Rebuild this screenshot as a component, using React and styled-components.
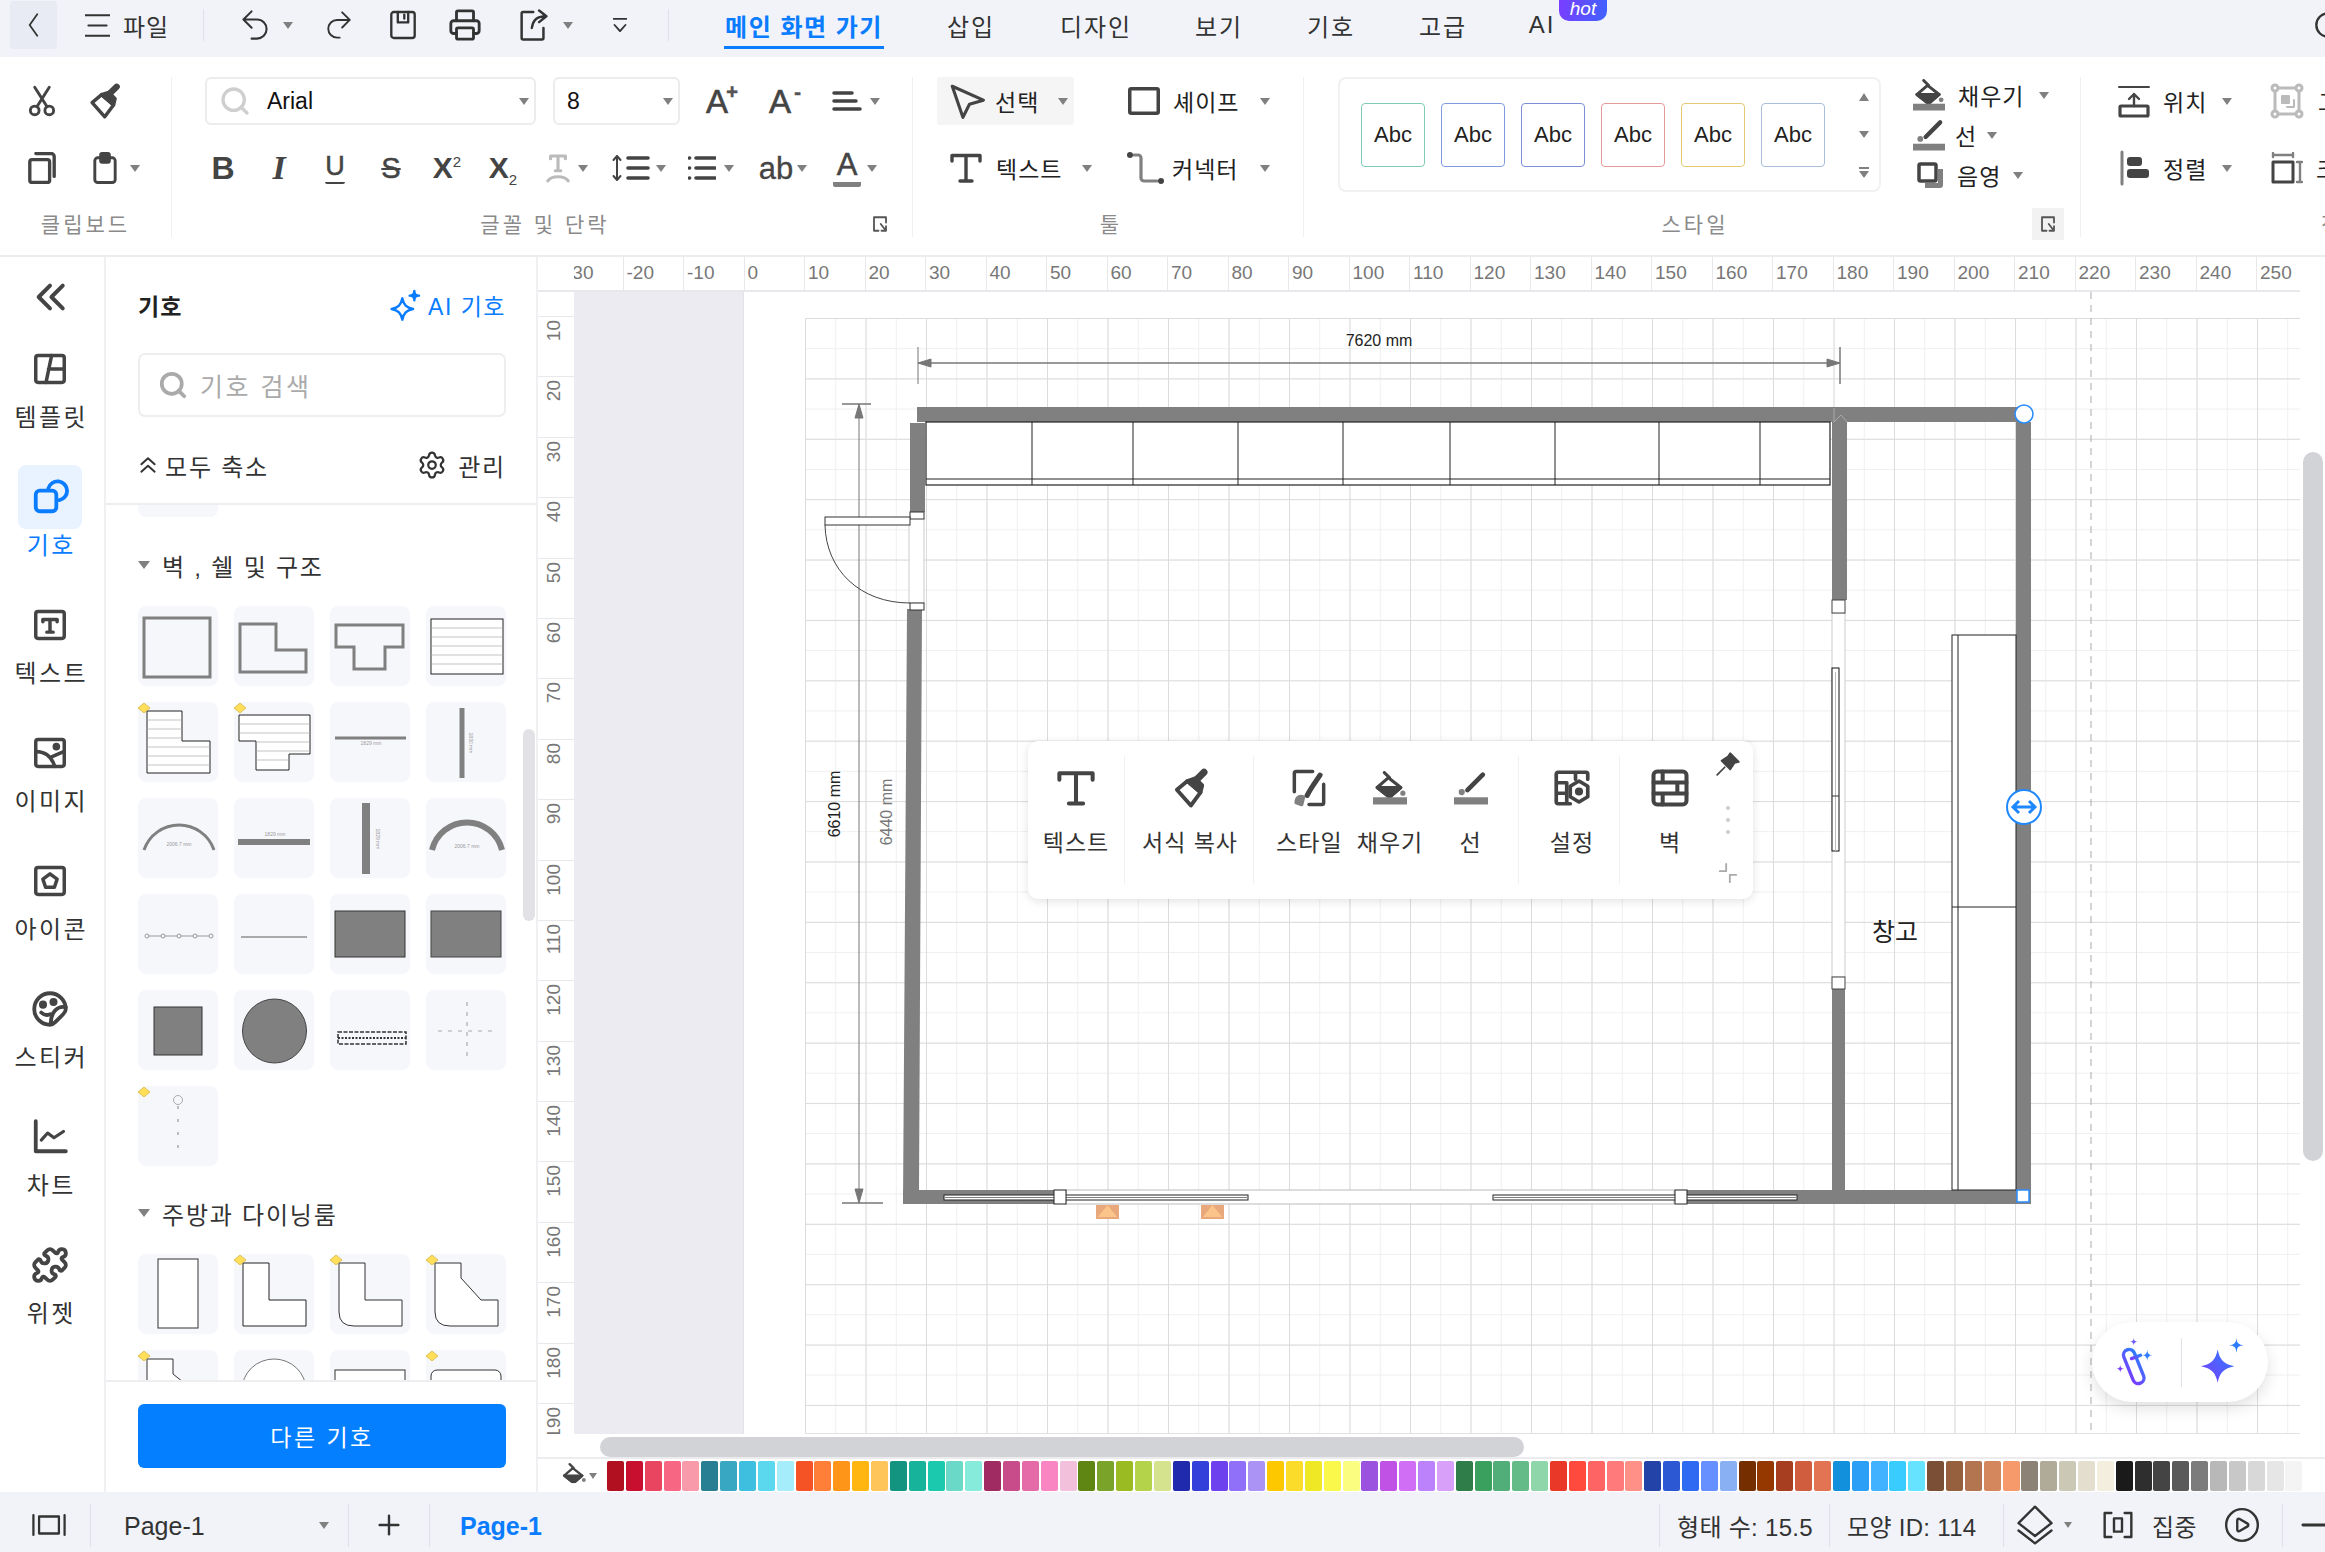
import React from "react";
import styled, { createGlobalStyle, css } from "styled-components";
import { Printer, Search, Settings, Plus, Minus, CirclePlay, Puzzle } from "lucide-react";

const FONT = `"Liberation Sans", "Noto Sans CJK KR", sans-serif`;
const BLUE = "#0a7cff";

const GlobalStyle = createGlobalStyle`
    html, body {
        margin: 0;
        width: 2325px;
        height: 1552px;
        overflow: hidden;
        background: #fff;
    }
    * { box-sizing: border-box; }
    body {
        font-family: ${FONT};
        color: #333;
    }
`;

const ml = css`
    margin-left: ${(p) => p.$ml || 0}px;
`;

const Page = styled.div`
    width: 2325px;
    height: 1552px;
    display: flex;
    flex-direction: column;
    overflow: hidden;
`;

/* ---- small shared parts ---- */

const Ico = styled.svg.attrs((p) => ({ viewBox: p.$box || "0 0 24 24" }))`
    ${ml}
    flex: none;
    display: block;
    width: ${(p) => p.$s || 32}px;
    height: ${(p) => p.$h || p.$s || 32}px;
    fill: none;
    stroke: currentColor;
    stroke-width: ${(p) => p.$sw || 2};
    stroke-linecap: round;
    stroke-linejoin: round;
    color: ${(p) => p.$c || "#444"};
`;

const Caret = styled.span`
    ${ml}
    flex: none;
    width: 0;
    height: 0;
    border-left: ${(p) => p.$s || 5}px solid transparent;
    border-right: ${(p) => p.$s || 5}px solid transparent;
    border-top: ${(p) => (p.$s || 5) + 2}px solid #808080;
`;

const VRule = styled.span`
    ${ml}
    flex: none;
    width: 1px;
    height: ${(p) => p.$h || 32}px;
    background: #dfe1e8;
`;

/* ---- title bar ---- */

const TitleBar = styled.div`
    height: 57px;
    flex: none;
    display: flex;
    align-items: center;
    padding-bottom: 7px;
    background: #f1f3f9;
    font-size: 24px;
`;

const BackBtn = styled.div`
    ${ml}
    flex: none;
    width: 47px;
    height: 48px;
    display: flex;
    align-items: center;
    justify-content: center;
    border-radius: 4px;
    background: #e8ebf3;
`;

const FileLabel = styled.span`
    ${ml}
    flex: none;
    width: 46px;
    font-size: 24px;
    letter-spacing: 1px;
    white-space: nowrap;
    color: #333;
`;

const Tab = styled.div`
    ${ml}
    position: relative;
    flex: none;
    width: ${(p) => p.$w}px;
    text-align: center;
    white-space: nowrap;
    letter-spacing: 2px;
    color: ${(p) => (p.$active ? BLUE : "#333")};
    font-weight: ${(p) => (p.$active ? 700 : 400)};
    ${(p) =>
        p.$active &&
        css`
            letter-spacing: 1.5px;
            &::after {
                content: "";
                position: absolute;
                left: 0;
                right: 0;
                top: 38px;
                height: 3px;
                background: ${BLUE};
            }
        `}
`;

const HotBadge = styled.span`
    position: absolute;
    left: 32px;
    top: -11px;
    width: 48px;
    height: 21px;
    border-radius: 0 0 10px 10px;
    background: linear-gradient(100deg, #7a3dff, #3f63ff);
    color: #fff;
    font-size: 19px;
    line-height: 18px;
    font-style: italic;
    letter-spacing: 0;
    font-weight: 400;
`;

/* ---- ribbon ---- */

const Ribbon = styled.div`
    height: 200px;
    flex: none;
    display: flex;
    background: #fff;
    border-bottom: 2px solid #ececef;
    overflow: hidden;
`;

const Group = styled.div`
    position: relative;
    flex: none;
    width: ${(p) => p.$w}px;
    height: 160px;
    margin-top: 20px;
    border-right: ${(p) => (p.$open ? "none" : "1px solid #f0f0f2")};
`;

const Rows = styled.div`
    height: 115px;
    display: flex;
    flex-direction: column;
    justify-content: space-between;
`;

const Row = styled.div`
    height: 48px;
    display: flex;
    align-items: center;
`;

const GroupLabel = styled.div`
    ${ml}
    margin-top: 21px;
    padding-left: ${(p) => p.$shift || 0}px;
    text-align: ${(p) => (p.$ml ? "left" : "center")};
    font-size: 21px;
    line-height: 24px;
    letter-spacing: 3px;
    white-space: nowrap;
    color: #8a8a8a;
`;

const Launcher = styled.div`
    position: absolute;
    right: 16px;
    top: 131px;
    width: 32px;
    height: 32px;
    display: flex;
    align-items: center;
    justify-content: center;
    background: ${(p) => (p.$on ? "#f2f2f2" : "transparent")};
`;

const Cell = styled.div`
    ${ml}
    flex: none;
    width: ${(p) => p.$w}px;
    display: flex;
    align-items: center;
    justify-content: center;
    gap: ${(p) => p.$gap || 0}px;
    color: #444;
`;

const Glyph = styled.span`
    position: relative;
    font-family: ${(p) => (p.$serif ? '"Liberation Serif", serif' : '"Liberation Sans", sans-serif')};
    font-size: ${(p) => p.$s || 32}px;
    line-height: 1;
    font-weight: ${(p) => p.$wt || 700};
    font-style: ${(p) => (p.$it ? "italic" : "normal")};
    text-decoration: ${(p) => p.$deco || "none"};
    -webkit-text-stroke: ${(p) => p.$th || 0}px currentColor;
    color: ${(p) => p.$c || "#444"};
    sup, sub {
        font-size: 15px;
        line-height: 0;
        font-weight: 400;
        -webkit-text-stroke: 0;
    }
`;

const BarredGlyph = styled(Glyph)`
    display: inline-block;
    padding: 0 ${(p) => p.$pad || 0}px 2px;
    border-bottom: ${(p) => p.$bar || 5}px solid ${(p) => p.$barC || "#808080"};
    border-radius: 0 0 2px 2px;
`;

const SizeMark = styled.span`
    position: absolute;
    right: -10px;
    top: -3px;
    font-size: 20px;
    line-height: 20px;
    font-weight: 700;
    color: #555;
`;

const Field = styled.div`
    ${ml}
    flex: none;
    width: ${(p) => p.$w}px;
    height: 48px;
    display: flex;
    align-items: center;
    padding: 0 5px 0 ${(p) => p.$pl || 12}px;
    border: 2px solid #ececee;
    border-radius: 6px;
    font-size: 23px;
    color: #111;
`;

const FieldText = styled.span`
    ${ml}
    flex: 1;
`;

const SelectBtn = styled.div`
    ${ml}
    flex: none;
    width: 137px;
    height: 48px;
    display: flex;
    align-items: center;
    padding-left: 12px;
    border-radius: 3px;
    background: #f5f5f5;
`;

const ToolText = styled.span`
    ${ml}
    flex: none;
    width: ${(p) => (p.$w ? `${p.$w}px` : "auto")};
    font-size: 23px;
    letter-spacing: 1px;
    white-space: nowrap;
    color: #222;
`;

const StyleBox = styled.div`
    ${ml}
    flex: none;
    width: 543px;
    height: 115px;
    display: flex;
    align-items: center;
    padding-left: 21px;
    gap: 16px;
    border: 2px solid #f1f1f3;
    border-radius: 8px;
`;

const StyleCard = styled.div`
    flex: none;
    width: 64px;
    height: 64px;
    display: flex;
    align-items: center;
    justify-content: center;
    border: 1px solid ${(p) => p.$c};
    border-radius: 4px;
    font-size: 22px;
    color: #222;
`;

const StyleArrows = styled.div`
    flex: 1;
    height: 100%;
    display: flex;
    flex-direction: column;
    align-items: center;
    justify-content: space-between;
    padding: 14px 0 12px 8px;
`;

const UpCaret = styled(Caret)`
    border-top: none;
    border-bottom: 8px solid #808080;
`;

const ArrowStack = styled.div`
    display: flex;
    flex-direction: column;
    align-items: center;
    gap: 2px;
    &::before {
        content: "";
        width: 10px;
        height: 2px;
        background: #808080;
    }
`;

const StyleRow = styled.div`
    display: flex;
    height: 115px;
`;

const FillCol = styled.div`
    ${ml}
    display: flex;
    flex-direction: column;
    justify-content: space-between;
    height: 118px;
    margin-top: -1px;
`;

const FillRow = styled.div`
    height: 38px;
    display: flex;
    align-items: center;
`;

/* ---- main area ---- */

const Main = styled.div`
    flex: 1;
    min-height: 0;
    display: flex;
`;

const Sidebar = styled.div`
    width: 106px;
    flex: none;
    padding-right: 4px;
    border-right: 2px solid #f0f0f2;
`;

const CollapseBtn = styled.div`
    height: 80px;
    display: flex;
    align-items: center;
    justify-content: center;
`;

const NavItem = styled.div`
    height: 128px;
    display: flex;
    flex-direction: column;
    align-items: center;
`;

const NavIcon = styled.div`
    flex: none;
    width: 64px;
    height: 64px;
    display: flex;
    align-items: center;
    justify-content: center;
    border-radius: 8px;
    background: ${(p) => (p.$active ? "#e9f3ff" : "transparent")};
`;

const NavLabel = styled.div`
    padding-top: 1px;
    line-height: 32px;
    font-size: 24px;
    letter-spacing: 2.4px;
    margin-right: -2.4px;
    white-space: nowrap;
    color: ${(p) => (p.$active ? BLUE : "#333")};
`;

const Panel = styled.div`
    width: 432px;
    flex: none;
    display: flex;
    flex-direction: column;
    border-right: 2px solid #f0f0f2;
`;

const PanelHead = styled.div`
    height: 248px;
    flex: none;
    padding: 32px 30px 0 32px;
    border-bottom: 2px solid #eeeef0;
`;

const HeadRow = styled.div`
    height: 32px;
    display: flex;
    align-items: center;
    justify-content: space-between;
`;

const PanelTitle = styled.div`
    font-size: 23px;
    font-weight: 700;
    letter-spacing: 1px;
    color: #222;
`;

const AiLink = styled.div`
    display: flex;
    align-items: center;
    gap: 7px;
    font-size: 23px;
    letter-spacing: 1.5px;
    color: ${BLUE};
`;

const SearchBox = styled.div`
    height: 64px;
    margin: 32px 0;
    display: flex;
    align-items: center;
    gap: 12px;
    padding-left: 18px;
    border: 2px solid #eeeef0;
    border-radius: 7px;
    font-size: 25px;
    letter-spacing: 2.5px;
    color: #aaa;
`;

const HeadGroup = styled.div`
    display: flex;
    align-items: center;
    gap: ${(p) => p.$gap || 11}px;
    font-size: 24px;
    letter-spacing: 1.8px;
    color: #333;
`;

const Scroller = styled.div`
    position: relative;
    flex: 1;
    min-height: 0;
    overflow: hidden;
    padding: 0 32px;
`;

const ScrollThumb = styled.div`
    position: absolute;
    right: 1px;
    top: 224px;
    width: 12px;
    height: 192px;
    border-radius: 6px;
    background: #e2e2e6;
`;

const CutCard = styled.div`
    width: 80px;
    height: 12px;
    border-radius: 0 0 8px 8px;
    background: #f6f7fb;
`;

const SectionHead = styled.div`
    height: 32px;
    margin: ${(p) => p.$mt}px 0 25px;
    display: flex;
    align-items: center;
    gap: 12px;
    font-size: 24px;
    letter-spacing: 1.8px;
    color: #333;
`;

const SymbolGrid = styled.div`
    display: grid;
    grid-template-columns: repeat(4, 80px);
    grid-auto-rows: 80px;
    gap: 16px;
`;

const SymbolCard = styled.div`
    position: relative;
    border-radius: 8px;
    background: #f6f7fb;
    svg {
        display: block;
        width: 80px;
        height: 80px;
    }
`;

const PanelFoot = styled.div`
    height: 112px;
    flex: none;
    padding: 22px 30px 0 32px;
    border-top: 2px solid #eeeef0;
`;

const MoreBtn = styled.div`
    height: 64px;
    display: flex;
    align-items: center;
    justify-content: center;
    border-radius: 6px;
    background: #047fff;
    color: #fff;
    font-size: 23px;
    letter-spacing: 2.5px;
`;

const Workspace = styled.div`
    flex: 1;
    min-width: 0;
    display: flex;
    flex-direction: column;
`;

const TopRuler = styled.div`
    height: 35px;
    flex: none;
    display: flex;
    width: 1762px;
    overflow: hidden;
    border-bottom: 2px solid #e8e8ec;
`;

const RulerCorner = styled.div`
    width: 36px;
    flex: none;
    background: #fff;
    position: relative;
    z-index: 1;
`;

const HTicks = styled.div`
    display: flex;
    margin-left: -12px;
`;

const HTick = styled.div`
    flex: none;
    width: 60.5px;
    padding: 3px 0 0 3px;
    border-left: 1px solid #e8e8ec;
    font-size: 19px;
    line-height: 26px;
    color: #777;
`;

const MidRow = styled.div`
    flex: 1;
    min-height: 0;
    display: flex;
`;

const SideRuler = styled.div`
    width: 36px;
    flex: none;
    padding-top: 24px;
    overflow: hidden;
`;

const VTick = styled.div`
    height: 60.4px;
    display: flex;
    justify-content: center;
    align-items: flex-start;
    padding: 3px 4px 0 0;
    border-top: 1px solid #e8e8ec;
    font-size: 19px;
    line-height: 22px;
    color: #777;
    white-space: nowrap;
    span {
        writing-mode: vertical-rl;
        transform: rotate(180deg);
    }
`;

const Canvas = styled.div`
    position: relative;
    width: 1726px;
    flex: none;
    display: flex;
    overflow: hidden;
`;

const Gutter = styled.div`
    width: 170px;
    flex: none;
    background: #ebebf1;
    border-right: 1px solid #e2e2e8;
`;

const Sheet = styled.div`
    flex: 1;
    padding: 26px 0 0 61px;
    background: #fff;
`;

const Grid = styled.div`
    width: 100%;
    height: 100%;
    background-color: #fff;
    background-image:
        linear-gradient(to right, #dcdcdc 1px, transparent 1px),
        linear-gradient(to bottom, #dcdcdc 1px, transparent 1px),
        linear-gradient(to right, #efefef 1px, transparent 1px),
        linear-gradient(to bottom, #efefef 1px, transparent 1px);
    background-size: 60.5px 60.4px, 60.5px 60.4px, 30.25px 30.2px, 30.25px 30.2px;
    border-bottom: 1px solid #e2e2e2;
`;

const PlanSvg = styled.svg`
    position: absolute;
    left: 0;
    top: 0;
    width: 1726px;
    height: 1142px;
`;

const FloatBar = styled.div`
    position: absolute;
    left: 454px;
    top: 449px;
    width: 725px;
    height: 158px;
    display: flex;
    padding: 15px 0;
    background: #fff;
    border-radius: 10px;
    box-shadow: 0 2px 10px rgba(0, 0, 0, 0.12);
`;

const FloatSection = styled.div`
    flex: none;
    width: ${(p) => p.$w}px;
    display: flex;
    justify-content: center;
    padding: 0 ${(p) => p.$pr || 0}px 0 ${(p) => p.$pl || 0}px;
    border-right: ${(p) => (p.$last ? "none" : "1px solid #f0f0f2")};
`;

const FloatItem = styled.div`
    flex: 1;
    min-width: 0;
    display: flex;
    flex-direction: column;
    align-items: center;
    padding-top: 9px;
    font-size: 23px;
    letter-spacing: 1px;
    white-space: nowrap;
    color: #333;
`;

const FloatIcon = styled.div`
    height: 46px;
    display: flex;
    align-items: center;
`;

const FloatLabel = styled.div`
    margin-top: 16px;
    line-height: 32px;
`;

const FloatSide = styled.div`
    flex: 1;
    display: flex;
    flex-direction: column;
    align-items: center;
    margin-top: -5px;
`;

const Dot = styled.span`
    flex: none;
    width: 4px;
    height: 4px;
    margin-top: ${(p) => p.$mt || 8}px;
    border-radius: 50%;
    background: #ccc;
`;

const ResizeMark = styled(Ico)`
    margin-top: 28px;
`;

const AiFloat = styled.div`
    position: absolute;
    left: 1518px;
    top: 1030px;
    width: 176px;
    height: 80px;
    display: flex;
    align-items: center;
    justify-content: space-around;
    padding: 0 8px;
    background: #fff;
    border-radius: 40px;
    box-shadow: 0 6px 16px rgba(0, 0, 0, 0.12);
`;

const VScroll = styled.div`
    flex: 1;
    padding: 160px 2px 0 3px;
`;

const Thumb = styled.div`
    width: ${(p) => (p.$w ? `${p.$w}px` : "100%")};
    height: ${(p) => (p.$h ? `${p.$h}px` : "100%")};
    ${ml}
    border-radius: 10px;
    background: #d2d3d6;
`;

const HScroll = styled.div`
    height: 25px;
    flex: none;
    padding-top: 3px;
    border-bottom: 2px solid #ececef;
`;

const Palette = styled.div`
    height: 33px;
    flex: none;
    display: flex;
    align-items: center;
    padding-left: 23px;
`;

const Swatches = styled.div`
    ${ml}
    display: flex;
    gap: 1.86px;
`;

const Swatch = styled.span`
    width: 17px;
    height: 30px;
    border-radius: 2px;
    background: ${(p) => p.$c};
`;

/* ---- status bar ---- */

const StatusBar = styled.div`
    height: 60px;
    flex: none;
    display: flex;
    align-items: center;
    padding-top: 6px;
    background: #f1f3f9;
    color: #333;
`;

const PageName = styled.span`
    ${ml}
    flex: none;
    width: ${(p) => p.$w || 83}px;
    margin-top: 3px;
    font-size: 25px;
    font-family: "Liberation Sans", sans-serif;
    white-space: nowrap;
    color: ${(p) => (p.$active ? BLUE : "#333")};
    font-weight: ${(p) => (p.$active ? 700 : 400)};
`;

const StatusText = styled.span`
    ${ml}
    flex: none;
    width: ${(p) => p.$w}px;
    font-size: 24px;
    white-space: nowrap;
    letter-spacing: 0.3px;
`;

/* ---- icons ---- */

const Scissors = () => (
    <Ico $box="3 1.500 18 22" $s={30} $h={32} $sw={2}>
        <circle cx="7" cy="19" r="3" />
        <circle cx="17" cy="19" r="3" />
        <path d="M8.500 16.500 17 3M15.500 16.500 7 3" />
    </Ico>
);
const Painter = ({ s = 38 }) => (
    <Ico $s={s} $sw={2.200}>
        <path d="M10.500 8 18 14.500 12.500 22 4.500 13z" />
        <path d="M10.500 8 18 14.500l1-4-4-4z" fill="currentColor" />
        <path d="M16 7l4-4" strokeWidth="4" />
    </Ico>
);
const Copy = () => (
    <Ico $box="3 2 18 21" $s={30} $h={32} $sw={2.200}>
        <rect x="4" y="7" width="13" height="15" rx="1.500" />
        <path d="M8 3h10a2 2 0 0 1 2 2v13" />
    </Ico>
);
const Paste = () => (
    <Ico $box="4 1 16 22" $s={28} $h={32} $sw={2}>
        <rect x="5" y="5" width="14" height="17" rx="2" />
        <rect x="9" y="2" width="6" height="6" rx="1" fill="currentColor" />
    </Ico>
);
const AlignBars = () => (
    <Ico $box="0 0 30 24" $s={30} $h={24} $sw={3.500}>
        <path d="M2 4H20M2 12H24M2 20H28" />
    </Ico>
);
const SerifT = ({ s = 32 }) => (
    <Ico $box="0 0 32 32" $s={s} $sw={3.400}>
        <path d="M2 9V3.500H30V9M16 3.500V29M10 29H22" />
    </Ico>
);
const ArcT = () => (
    <Ico $box="0 0 26 32" $s={24} $h={30} $sw={3.400} $c="#bbb">
        <path d="M5 6V3H21V6M13 3V19M10 19H16" />
        <path d="M2 30c4-6 18-6 22 0" />
    </Ico>
);
const LineSpacing = () => (
    <Ico $box="0 0 38 28" $s={38} $h={28} $sw={3.600}>
        <path d="M16 4H36M16 14H36M16 24H36" />
        <path d="M5 2V26M1.500 6 5 2l3.500 4M1.500 22 5 26l3.500-4" strokeWidth="2" />
    </Ico>
);
const BulletList = () => (
    <Ico $box="0 0 28 28" $s={28} $sw={3.600}>
        <path d="M8 4H27M8 14H27M8 24H27M1.500 4h.1M1.500 14h.1M1.500 24h.1" />
    </Ico>
);
const Arrow = () => (
    <Ico $box="1 1 22 22" $s={36} $sw={1.900}>
        <path d="M3 3 22 11.500 13.500 14 9.500 22z" />
    </Ico>
);
const Connector = () => (
    <Ico $box="0 0 40 34" $s={40} $h={34} $sw={3.200}>
        <path d="M9 4h4a3 3 0 0 1 3 3v20a3 3 0 0 0 3 3h13" stroke="#808080" />
        <circle cx="5" cy="4" r="3" fill="currentColor" stroke="none" />
        <circle cx="36" cy="30" r="3" fill="currentColor" stroke="none" />
    </Ico>
);
const FillBucket = ({ s = 32, bar = "#808080" }) => (
    <Ico $box="0 0 33 32" $s={s} $sw={3}>
        <path d="M15 6 27 15.500 16 25 4 15.500z" />
        <path d="M4 15.500H27L16 25z" fill="currentColor" />
        <path d="M11 1l5 5" />
        <circle cx="29" cy="21" r="2.500" fill="#808080" stroke="none" />
        <rect x="0" y="25" width="33" height="7" fill={bar} stroke="none" />
    </Ico>
);
const Pen = ({ s = 32 }) => (
    <Ico $box="0 0 33 32" $s={s} $sw={4.500}>
        <path d="M28 3 13 18" />
        <circle cx="7.500" cy="20" r="3" fill="#808080" stroke="none" />
        <rect x="0" y="25" width="33" height="7" fill="#808080" stroke="none" />
    </Ico>
);
const Launch = () => (
    <Ico $s={18} $sw={2.400} $c="#555">
        <path d="M20 10V3H4v18h6" />
        <path d="M13 12l7 9M20 15v6h-6" />
    </Ico>
);

const NAV = [
    {
        label: "템플릿",
        icon: (
            <Ico $s={38} $sw={2.200}>
                <rect x="3" y="3.500" width="18" height="17" rx="1.500" />
                <path d="M13 3.500 9.500 20.500M11 12h10" />
            </Ico>
        ),
    },
    {
        label: "기호",
        active: true,
        icon: (
            <Ico $s={38} $sw={2.400} $c={BLUE}>
                <path d="M11 6.500A6 6 0 1 1 18 14" />
                <rect x="3" y="8" width="13" height="13" rx="2.500" />
            </Ico>
        ),
    },
    {
        label: "텍스트",
        icon: (
            <Ico $s={38} $sw={2.200}>
                <rect x="3" y="3.500" width="18" height="17" rx="1.500" />
                <path d="M7.500 10V8.500h9V10M12 8.500v8M10 16.500h4" />
            </Ico>
        ),
    },
    {
        label: "이미지",
        icon: (
            <Ico $s={38} $sw={2.200}>
                <rect x="3" y="3.500" width="18" height="17" rx="1.500" />
                <path d="M3 11c6 0 10 3 12 9.500M13 14.500 21 11" />
                <circle cx="16" cy="8" r="1.300" fill="currentColor" />
            </Ico>
        ),
    },
    {
        label: "아이콘",
        icon: (
            <Ico $s={38} $sw={2.200}>
                <rect x="3" y="3.500" width="18" height="17" rx="1.500" />
                <path d="M12 7.500l4.500 3.300-1.700 5.200H9.200l-1.700-5.200z" />
            </Ico>
        ),
    },
    {
        label: "스티커",
        icon: (
            <Ico $s={42} $sw={2.200}>
                <path d="M21 12a9 9 0 1 0-9 9c1 0 2-.5 3-1.500l4.500-4.500c1-1 1.500-2 1.500-3z" />
                <path d="M21 11c-4-1-8.500 2-8.500 9" />
                <circle cx="8" cy="9.500" r="1.200" fill="currentColor" />
                <circle cx="14" cy="8" r="1.200" fill="currentColor" />
                <path d="M7 14c1.500 1.500 3 1.800 5 1" />
            </Ico>
        ),
    },
    {
        label: "차트",
        icon: (
            <Ico $s={38} $sw={2.400}>
                <path d="M3 2v19h19" />
                <path d="M6.500 14l4-4.500 4 3 6-4" strokeWidth="2" />
            </Ico>
        ),
    },
    { label: "위젯", icon: <Puzzle size={38} color="#444" strokeWidth={2.400} /> },
];

const W = "#808080";
const hatch = (x1, x2, ys) => ys.map((y) => <path key={y} d={`M${x1} ${y}H${x2}`} stroke="#aaa" strokeWidth=".7" />);
const Diamond = () => <path d="M6 1 12 6 6 11 0 6z" fill="#ffdf5a" stroke="#c9a92c" strokeWidth=".6" />;
const Outline = ({ points, sw = 1, c = "#222" }) => <polygon points={points} fill="#fff" stroke={c} strokeWidth={sw} />;
const TinyLabel = ({ x, y, children, rot }) => (
    <text
        x={x}
        y={y}
        fontSize="5"
        textAnchor="middle"
        fill="#999"
        fontFamily="Liberation Sans"
        transform={rot ? `rotate(90 ${x} ${y})` : undefined}
    >
        {children}
    </text>
);

const WALLS = [
    <rect x="6" y="12" width="66" height="59" fill="none" stroke={W} strokeWidth="3" />,
    <polygon points="6,18 42,18 42,44 72,44 72,66 6,66" fill="none" stroke={W} strokeWidth="3" />,
    <polygon points="6,19 73,19 73,41 55,41 55,63 24,63 24,41 6,41" fill="none" stroke={W} strokeWidth="3" />,
    <>
        <rect x="5" y="13" width="72" height="55" fill="#fff" stroke="#222" />
        {hatch(5, 77, [22, 31, 40, 49, 58])}
    </>,
    <>
        <Outline points="9,9 44,9 44,39 72,39 72,71 9,71" />
        {hatch(9, 44, [18, 27, 36])}
        {hatch(9, 72, [45, 54, 63])}
        <Diamond />
    </>,
    <>
        <Outline points="5,13 76,13 76,52 55,52 55,68 22,68 22,39 5,39" />
        {hatch(5, 76, [22, 31])}
        {hatch(22, 76, [40, 49])}
        {hatch(22, 55, [58])}
        <Diamond />
    </>,
    <>
        <path d="M5 36H76" stroke={W} strokeWidth="3" />
        <TinyLabel x={41} y={43}>1829 mm</TinyLabel>
    </>,
    <>
        <path d="M36 6V76" stroke={W} strokeWidth="5" />
        <TinyLabel x={43} y={41} rot>1830 mm</TinyLabel>
    </>,
    <>
        <path d="M6 52A37 37 0 0 1 76 52" fill="none" stroke={W} strokeWidth="3" />
        <TinyLabel x={41} y={48}>2006.7 mm</TinyLabel>
    </>,
    <>
        <path d="M4 44H76" stroke={W} strokeWidth="6" />
        <TinyLabel x={41} y={38}>1829 mm</TinyLabel>
    </>,
    <>
        <path d="M36 5V76" stroke={W} strokeWidth="8" />
        <TinyLabel x={46} y={41} rot>1829 mm</TinyLabel>
    </>,
    <>
        <path d="M6 52A36 36 0 0 1 76 52" fill="none" stroke={W} strokeWidth="6" />
        <TinyLabel x={41} y={50}>2006.7 mm</TinyLabel>
    </>,
    <>
        <path d="M9 42H75" stroke="#999" strokeWidth="1" />
        {[9, 25, 41, 57, 73].map((x) => (
            <circle key={x} cx={x} cy="42" r="2" fill="#f6f7fb" stroke="#999" />
        ))}
    </>,
    <path d="M7 43H73" stroke="#aaa" strokeWidth="2" />,
    <rect x="5" y="17" width="70" height="46" fill={W} stroke="#333" />,
    <rect x="5" y="17" width="70" height="46" fill={W} stroke="#444" />,
    <rect x="16" y="17" width="48" height="48" fill={W} stroke="#333" />,
    <ellipse cx="40.500" cy="41" rx="32" ry="32" fill={W} stroke="#444" />,
    <>
        <rect x="8" y="42" width="68" height="12" fill="none" stroke="#333" strokeWidth="1.500" strokeDasharray="4 1.500" />
        <path d="M8 48H76" stroke="#333" strokeWidth="2" strokeDasharray="2 1.500" />
    </>,
    <path d="M12 41H70M41 12V70" stroke="#aaa" strokeWidth="1.200" strokeDasharray="4 6" />,
    <>
        <circle cx="40" cy="14" r="4.500" fill="none" stroke="#aaa" />
        <path d="M40 20V70" stroke="#aaa" strokeWidth="1.500" strokeDasharray="3 10" />
        <Diamond />
    </>,
];

const KITCHEN = [
    <rect x="20" y="5" width="40" height="69" fill="#fff" stroke="#333" />,
    <>
        <Outline points="9,9 35,9 35,46 72,46 72,72 9,72" />
        <Diamond />
    </>,
    <>
        <path d="M9 9H35V46H72V72H24Q9 72 9 58Z" fill="#fff" stroke="#333" />
        <Diamond />
    </>,
    <>
        <path d="M9 9H35V24L55 46H72V72H24Q9 72 9 58Z" fill="#fff" stroke="#333" />
        <Diamond />
    </>,
    <>
        <path d="M9 9H35V24L50 36H60V80H9Z" fill="#fff" stroke="#333" />
        <Diamond />
    </>,
    <ellipse cx="40" cy="40" rx="32" ry="31" fill="#fff" stroke="#777" />,
    <rect x="5" y="20" width="70" height="70" fill="#fff" stroke="#333" />,
    <>
        <rect x="5" y="20" width="70" height="70" rx="6" fill="#fff" stroke="#333" />
        <Diamond />
    </>,
];

const thumbs = (list) =>
    list.map((shape, i) => (
        <SymbolCard key={i}>
            <svg viewBox="0 0 80 80">{shape}</svg>
        </SymbolCard>
    ));

const HTICKS = Array.from({ length: 29 }, (_, i) => -30 + i * 10);
const VTICKS = Array.from({ length: 19 }, (_, i) => 10 + i * 10);

const COLORS = [
    "#b01020", "#c90f30", "#ea4560", "#f76784", "#f99aab",
    "#287f93", "#38a7c1", "#3fbfdf", "#5cd8ee", "#a6edfb",
    "#f55325", "#ff7e38", "#ff9518", "#ffb611", "#fec55a",
    "#129480", "#17b39b", "#1ac9ae", "#6bd9c8", "#87ebdb",
    "#a02b62", "#c94c8a", "#e56aa8", "#f986c3", "#f2c0db",
    "#5f8612", "#7aa329", "#9abc22", "#b4d24a", "#d5e38f",
    "#1f2aad", "#3340da", "#6d42ee", "#9070f8", "#ab93f5",
    "#fdc800", "#fcdc2a", "#efe825", "#faf84a", "#fbfd80",
    "#9b52df", "#c152e6", "#d06ff5", "#bc82fb", "#d9a0fa",
    "#2f7d49", "#3aa05d", "#52ae78", "#64bb88", "#90d6ab",
    "#ea3828", "#ff4a3d", "#ff6464", "#ff7a7a", "#ff9087",
    "#2343a8", "#2d58d4", "#2f6bf2", "#668fff", "#89b0f2",
    "#752e00", "#953800", "#a83e20", "#cf5d3e", "#e27353",
    "#1390dc", "#2a9ff5", "#40b2ff", "#39ccff", "#66e3ff",
    "#7a4f35", "#96603f", "#b37450", "#d4865c", "#f79a6b",
    "#8c8276", "#b0aa98", "#cbc8b6", "#e4decf", "#f3eedd",
    "#1a1a1a", "#2e2e2e", "#444444", "#5a5a5a", "#7c7c7c",
    "#b8b8b8", "#c8c8c8", "#d8d8d8", "#e6e6e6", "#f4f4f4", "#ffffff",
];

const STYLE_CARDS = ["#7fcbb7", "#7f9ce0", "#7d8fd6", "#e59a9a", "#e6c975", "#a9bedc"];

const CABINET_LINES = [1032, 1133, 1238, 1343, 1450, 1555, 1659, 1760];

const FloorPlan = () => (
    <PlanSvg viewBox="574 292 1726 1142">
        {/* page edge */}
        <path d="M2091 292V1430" stroke="#aaa" strokeDasharray="7 6" fill="none" />

        {/* dimensions */}
        <g stroke="#777" fill="#777">
            <path d="M918 347V384" fill="none" />
            <path d="M1840 347V384" strokeWidth="1.500" fill="none" />
            <path d="M918 363H1840" strokeWidth="1.500" fill="none" />
            <path d="M918 363l13-4v8zM1840 363l-13-4v8z" />
            <path d="M842 404H871M842 1203H883" strokeWidth="1.500" fill="none" />
            <path d="M859 404V1203" fill="none" />
            <path d="M859 404l-4 14h8zM859 1203l-4-14h8z" />
        </g>
        <text x="1379" y="346" textAnchor="middle" fontSize="16" fontFamily="Liberation Sans" fill="#222">
            7620 mm
        </text>
        <text x="840" y="804" textAnchor="middle" fontSize="16" fontFamily="Liberation Sans" fill="#222" transform="rotate(-90 840 804)">
            6610 mm
        </text>
        <text x="892" y="812" textAnchor="middle" fontSize="16" fontFamily="Liberation Sans" fill="#777" transform="rotate(-90 892 812)">
            6440 mm
        </text>

        {/* walls */}
        <g fill={W}>
            <rect x="917" y="407" width="1108" height="15" />
            <rect x="910" y="423" width="15" height="89" />
            <polygon points="907,609 922,609 919,1190 919,1204 903,1204" />
            <rect x="1832" y="422" width="15" height="178" />
            <rect x="2016" y="422" width="15" height="782" />
            <rect x="1832" y="989" width="13" height="215" />
            <rect x="903" y="1190" width="151" height="14" />
            <rect x="1687" y="1190" width="145" height="14" />
            <rect x="1845" y="1190" width="186" height="14" />
        </g>
        <path d="M1834 408V422M1834 422l7-7 6 7" stroke="#a8a8a8" fill="none" />

        {/* door */}
        <rect x="909" y="518" width="15" height="85" fill="#fff" stroke="#ccc" />
        <rect x="910" y="512" width="14" height="7" fill="#fff" stroke="#333" />
        <rect x="910" y="603" width="14" height="7" fill="#fff" stroke="#333" />
        <rect x="825" y="517" width="85" height="8" fill="#fff" stroke="#333" />
        <path d="M825 525C826 570 860 603 910 603" fill="none" stroke="#444" />

        {/* cabinets */}
        <rect x="926" y="422" width="904" height="63" fill="#fff" stroke="#222" strokeWidth="1.200" />
        <path d="M926 479H1830" stroke="#222" />
        {CABINET_LINES.map((x) => (
            <path key={x} d={`M${x} 422V485`} stroke="#222" />
        ))}
        <rect x="1952" y="635" width="64" height="555" fill="#fff" stroke="#222" />
        <path d="M1958 635V1190M1952 907H2016" stroke="#222" />

        {/* side window */}
        <rect x="1832" y="613" width="13" height="364" fill="#fff" stroke="#ccc" />
        <rect x="1832" y="668" width="7" height="183" fill="#fff" stroke="#111" />
        <path d="M1835.500 672V851" stroke="#bbb" />
        <path d="M1832 796h7" stroke="#333" />
        <rect x="1832" y="600" width="13" height="13" fill="#fff" stroke="#444" />
        <rect x="1832" y="977" width="13" height="12" fill="#fff" stroke="#444" />

        {/* front windows */}
        <rect x="1066" y="1190" width="608" height="14" fill="#fff" stroke="#bbb" />
        <rect x="944" y="1195" width="304" height="5" fill="#fff" stroke="#222" />
        <path d="M945 1197.500H1247" stroke={W} />
        <rect x="1493" y="1195" width="304" height="5" fill="#fff" stroke="#222" />
        <path d="M1494 1197.500H1796" stroke={W} />
        <rect x="1054" y="1190" width="12" height="14" fill="#fff" stroke="#222" />
        <rect x="1675" y="1190" width="12" height="14" fill="#fff" stroke="#222" />

        {/* markers below the window */}
        {[1096, 1201].map((x) => (
            <g key={x}>
                <rect x={x} y="1205" width="23" height="14" fill="#e9a87c" />
                <path d={`M${x + 2} 1217l9.500-12 9.500 12z`} fill="#fbc58a" />
            </g>
        ))}

        <text x="1895" y="941" textAnchor="middle" fontSize="25" fontFamily="Noto Sans CJK KR" fill="#222">
            창고
        </text>

        {/* selection handles */}
        <circle cx="2024" cy="414" r="9" fill="#fff" stroke="#2a8cff" strokeWidth="1.500" />
        <rect x="2017" y="1190" width="12" height="12" fill="#fff" stroke="#2a8cff" strokeWidth="1.500" />
        <circle cx="2024" cy="807" r="17" fill="#fff" stroke="#1e88ff" strokeWidth="2" />
        <path d="M2014 807H2034M2019 801l-6 6 6 6M2029 801l6 6-6 6" fill="none" stroke="#1e88ff" strokeWidth="3" />
    </PlanSvg>
);

const Spark = ({ id, from, to }) => (
    <defs>
        <linearGradient id={id} x1="0" y1="1" x2="1" y2="0">
            <stop offset="0" stopColor={from} />
            <stop offset="1" stopColor={to} />
        </linearGradient>
    </defs>
);

const STAR = "M10 7C11 12 13 14 18 15 13 16 11 18 10 23 9 18 7 16 2 15 7 14 9 12 10 7Z";
const sparkle = (x, y, r) =>
    `M${x} ${y - r}Q${x} ${y} ${x + r} ${y}Q${x} ${y} ${x} ${y + r}Q${x} ${y} ${x - r} ${y}Q${x} ${y} ${x} ${y - r}Z`;

export default function App() {
    return (
        <Page>
            <GlobalStyle />
            <TitleBar>
                <BackBtn $ml={10}>
                    <Ico $s={26} $sw={1.600} $c="#333">
                        <path d="M15 2 8 12l7 10" />
                    </Ico>
                </BackBtn>
                <Ico $box="1 2 22 20" $ml={28} $s={25} $h={23} $sw={1.800} $c="#333">
                    <path d="M1 3H23M4 12H20M1 21H23" />
                </Ico>
                <FileLabel $ml={13}>파일</FileLabel>
                <VRule $ml={34} />
                <Ico $box="2 1 19 22" $ml={38} $s={26} $h={30} $sw={1.500} $c="#333">
                    <path d="M9 2 3 8l6 6M3 8h10a7 7 0 0 1 7 7 7 7 0 0 1-7 7H9" />
                </Ico>
                <Caret $ml={15} />
                <Ico $box="3 1 19 22" $ml={34} $s={24} $h={30} $sw={1.500} $c="#333">
                    <path d="M15 2l6 6-6 6M21 8H11a7 7 0 0 0-7 7 7 7 0 0 0 7 7h2" />
                </Ico>
                <Ico $box="2 1 20 22" $ml={39} $s={26} $h={30} $sw={1.800} $c="#333">
                    <rect x="3" y="2" width="18" height="20" rx="2" />
                    <path d="M8 2v8h8V2M13 4v3" />
                </Ico>
                <Printer style={{ marginLeft: 32, flex: "none" }} size={34} color="#333" strokeWidth={2} />
                <Ico $box="3 1 19 22" $ml={38} $s={28} $h={32} $sw={1.700} $c="#333">
                    <path d="M12 3H5a1 1 0 0 0-1 1v17a1 1 0 0 0 1 1h13a1 1 0 0 0 1-1v-7" />
                    <path d="M16 2l5 4-5 4M21 6c-6 0-9 2-10 8" />
                </Ico>
                <Caret $ml={15} />
                <Ico $box="3 2 18 18" $ml={40} $s={14} $sw={2.400} $c="#333">
                    <path d="M4 3H20M5 11l7 8 7-8" />
                </Ico>
                <VRule $ml={41} />
                <Tab $ml={55} $w={160} $active>메인 화면 가기</Tab>
                <Tab $ml={62} $w={50}>삽입</Tab>
                <Tab $ml={62} $w={76}>디자인</Tab>
                <Tab $ml={60} $w={50}>보기</Tab>
                <Tab $ml={62} $w={50}>기호</Tab>
                <Tab $ml={62} $w={50}>고급</Tab>
                <Tab $ml={59} $w={30}>
                    AI
                    <HotBadge>hot</HotBadge>
                </Tab>
                <Ico $ml={757} $s={28} $sw={2} $c="#333">
                    <circle cx="12" cy="12" r="10" />
                </Ico>
            </TitleBar>

            <Ribbon>
                <Group $w={172}>
                    <Rows>
                        <Row>
                            <Cell $ml={22} $w={40}><Scissors /></Cell>
                            <Cell $ml={22} $w={40}><Painter /></Cell>
                        </Row>
                        <Row>
                            <Cell $ml={22} $w={40}><Copy /></Cell>
                            <Cell $ml={23} $w={40}><Paste /></Cell>
                            <Caret $ml={5} />
                        </Row>
                    </Rows>
                    <GroupLabel>클립보드</GroupLabel>
                </Group>

                <Group $w={741}>
                    <Rows>
                        <Row>
                            <Field $ml={33} $w={331}>
                                <Search size={32} color="#cfcfcf" strokeWidth={2.500} />
                                <FieldText $ml={16}>Arial</FieldText>
                                <Caret />
                            </Field>
                            <Field $ml={17} $w={127}>
                                <FieldText>8</FieldText>
                                <Caret />
                            </Field>
                            <Cell $ml={21} $w={32}>
                                <Glyph $s={33} $wt={400} $th={0.600}>A<SizeMark>+</SizeMark></Glyph>
                            </Cell>
                            <Cell $ml={31} $w={32}>
                                <Glyph $s={33} $wt={400} $th={0.600}>A<SizeMark>-</SizeMark></Glyph>
                            </Cell>
                            <Cell $ml={36} $w={29}><AlignBars /></Cell>
                            <Caret $ml={9} />
                        </Row>
                        <Row>
                            <Cell $ml={23} $w={56}><Glyph>B</Glyph></Cell>
                            <Cell $w={56}><Glyph $serif $it $s={34}>I</Glyph></Cell>
                            <Cell $w={56}><BarredGlyph $s={27} $wt={400} $th={0.500} $bar={2} $barC="#444">U</BarredGlyph></Cell>
                            <Cell $w={56}><Glyph $s={29} $wt={400} $th={0.500} $deco="line-through">S</Glyph></Cell>
                            <Cell $w={56}><Glyph $s={30}>X<sup>2</sup></Glyph></Cell>
                            <Cell $w={56}><Glyph $s={30}>X<sub>2</sub></Glyph></Cell>
                            <Cell $w={72} $gap={8}>
                                <ArcT />
                                <Caret />
                            </Cell>
                            <Cell $w={72} $gap={6}>
                                <LineSpacing />
                                <Caret />
                            </Cell>
                            <Cell $w={72} $gap={8}>
                                <BulletList />
                                <Caret />
                            </Cell>
                            <Cell $w={72} $gap={4}>
                                <Glyph $s={31} $wt={400} $th={0.300}>ab</Glyph>
                                <Caret />
                            </Cell>
                            <Cell $w={72} $gap={6}>
                                <BarredGlyph $s={31} $wt={400} $th={0.500} $pad={4}>A</BarredGlyph>
                                <Caret />
                            </Cell>
                        </Row>
                    </Rows>
                    <GroupLabel $shift={6}>글꼴 및 단락</GroupLabel>
                    <Launcher><Launch /></Launcher>
                </Group>

                <Group $w={391}>
                    <Rows>
                        <Row>
                            <SelectBtn $ml={24}>
                                <Arrow />
                                <ToolText $ml={10} $w={47}>선택</ToolText>
                                <Caret $ml={16} />
                            </SelectBtn>
                            <Ico $box="0 0 32 28" $ml={54} $s={32} $h={28} $sw={3.500}>
                                <rect x="1.750" y="1.750" width="28.500" height="24.500" rx="1.500" />
                            </Ico>
                            <ToolText $ml={13} $w={70}>셰이프</ToolText>
                            <Caret $ml={17} />
                        </Row>
                        <Row>
                            <Cell $ml={37} $w={32}><SerifT /></Cell>
                            <ToolText $ml={14} $w={67}>텍스트</ToolText>
                            <Caret $ml={19} />
                            <Cell $ml={33} $w={40}><Connector /></Cell>
                            <ToolText $ml={7} $w={71}>커넥터</ToolText>
                            <Caret $ml={17} />
                        </Row>
                    </Rows>
                    <GroupLabel $shift={6}>툴</GroupLabel>
                </Group>

                <Group $w={777}>
                    <StyleRow>
                        <StyleBox $ml={34}>
                            {STYLE_CARDS.map((c) => (
                                <StyleCard key={c} $c={c}>Abc</StyleCard>
                            ))}
                            <StyleArrows>
                                <UpCaret />
                                <Caret />
                                <ArrowStack><Caret /></ArrowStack>
                            </StyleArrows>
                        </StyleBox>
                        <FillCol $ml={32}>
                            <FillRow>
                                <FillBucket />
                                <ToolText $ml={13} $w={67}>채우기</ToolText>
                                <Caret $ml={14} />
                            </FillRow>
                            <FillRow>
                                <Pen />
                                <ToolText $ml={10} $w={22}>선</ToolText>
                                <Caret $ml={10} />
                            </FillRow>
                            <FillRow>
                                <Ico $box="0 0 26 26" $ml={4} $s={26} $sw={3.500}>
                                    <path d="M21 7h5v16a3 3 0 0 1-3 3H8v-5h13z" fill="#808080" stroke="none" />
                                    <rect x="2" y="2" width="17" height="17" rx="1.500" />
                                </Ico>
                                <ToolText $ml={14} $w={45}>음영</ToolText>
                                <Caret $ml={11} />
                            </FillRow>
                        </FillCol>
                    </StyleRow>
                    <GroupLabel $shift={6}>스타일</GroupLabel>
                    <Launcher $on><Launch /></Launcher>
                </Group>

                <Group $w={300} $open>
                    <Rows>
                        <Row>
                            <Ico $box="0 0 32 33" $ml={37} $s={32} $h={33} $sw={3.200}>
                                <path d="M1 2H31" strokeWidth="2" />
                                <path d="M16 21V9M11 14l5-5 5 5" strokeWidth="2.400" />
                                <rect x="2" y="21" width="28" height="10" rx="1" />
                            </Ico>
                            <ToolText $ml={13} $w={46}>위치</ToolText>
                            <Caret $ml={13} />
                            <Ico $box="0 0 34 36" $ml={38} $s={34} $h={36} $sw={3} $c="#bbb">
                                <rect x="5" y="5" width="24" height="26" rx="2" />
                                <circle cx="5" cy="5" r="3" fill="#fff" />
                                <circle cx="29" cy="5" r="3" fill="#fff" />
                                <circle cx="5" cy="31" r="3" fill="#fff" />
                                <circle cx="29" cy="31" r="3" fill="#fff" />
                                <rect x="11" y="12" width="9" height="9" rx="1" fill="currentColor" stroke="none" />
                                <path d="M24 17v7h-7" strokeWidth="2" />
                            </Ico>
                            <ToolText $ml={14}>그룹</ToolText>
                        </Row>
                        <Row>
                            <Ico $box="0 0 30 36" $ml={39} $s={30} $h={36}>
                                <path d="M2 2V34" stroke="#808080" strokeWidth="3" />
                                <rect x="7" y="7" width="15" height="9" rx="3" fill="currentColor" stroke="none" />
                                <rect x="7" y="19" width="22" height="9" rx="3" fill="currentColor" stroke="none" />
                            </Ico>
                            <ToolText $ml={13} $w={46}>정렬</ToolText>
                            <Caret $ml={13} />
                            <Ico $box="0 0 32 32" $ml={39} $s={32} $sw={3}>
                                <path d="M2 3H22M2 1V5M22 1V5" stroke="#808080" strokeWidth="2.400" />
                                <rect x="2" y="10" width="20" height="20" />
                                <path d="M29 10V30M26 10H31M26 30H31" stroke="#808080" strokeWidth="2.400" />
                            </Ico>
                            <ToolText $ml={13}>크기</ToolText>
                        </Row>
                    </Rows>
                    <GroupLabel $ml={240}>정렬</GroupLabel>
                </Group>
            </Ribbon>

            <Main>
                <Sidebar>
                    <CollapseBtn>
                        <Ico $s={34} $sw={2.800}>
                            <path d="M12 4 4 12l8 8M21 4l-8 8 8 8" />
                        </Ico>
                    </CollapseBtn>
                    {NAV.map((item) => (
                        <NavItem key={item.label}>
                            <NavIcon $active={item.active}>{item.icon}</NavIcon>
                            <NavLabel $active={item.active}>{item.label}</NavLabel>
                        </NavItem>
                    ))}
                </Sidebar>

                <Panel>
                    <PanelHead>
                        <HeadRow>
                            <PanelTitle>기호</PanelTitle>
                            <AiLink>
                                <Ico $s={32} $sw={1.800} $c={BLUE}>
                                    <path d={STAR} />
                                    <path d={sparkle(19, 5, 3.500)} fill="currentColor" />
                                </Ico>
                                AI 기호
                            </AiLink>
                        </HeadRow>
                        <SearchBox>
                            <Search size={30} color="#aaa" strokeWidth={3} />
                            기호 검색
                        </SearchBox>
                        <HeadRow>
                            <HeadGroup $gap={7}>
                                <Ico $s={20} $sw={2.400} $c="#333">
                                    <path d="M4 11l8-7 8 7M4 20l8-7 8 7" />
                                </Ico>
                                모두 축소
                            </HeadGroup>
                            <HeadGroup>
                                <Settings size={30} color="#333" strokeWidth={1.800} />
                                관리
                            </HeadGroup>
                        </HeadRow>
                    </PanelHead>
                    <Scroller>
                        <CutCard />
                        <SectionHead $mt={32}>
                            <Caret $s={6} />
                            벽 , 쉘 및 구조
                        </SectionHead>
                        <SymbolGrid>{thumbs(WALLS)}</SymbolGrid>
                        <SectionHead $mt={31}>
                            <Caret $s={6} />
                            주방과 다이닝룸
                        </SectionHead>
                        <SymbolGrid>{thumbs(KITCHEN)}</SymbolGrid>
                        <ScrollThumb />
                    </Scroller>
                    <PanelFoot>
                        <MoreBtn>다른 기호</MoreBtn>
                    </PanelFoot>
                </Panel>

                <Workspace>
                    <TopRuler>
                        <RulerCorner />
                        <HTicks>
                            {HTICKS.map((n) => (
                                <HTick key={n}>{n}</HTick>
                            ))}
                        </HTicks>
                    </TopRuler>
                    <MidRow>
                        <SideRuler>
                            {VTICKS.map((n) => (
                                <VTick key={n}><span>{n}</span></VTick>
                            ))}
                        </SideRuler>
                        <Canvas>
                            <Gutter />
                            <Sheet><Grid /></Sheet>
                            <FloorPlan />
                            <FloatBar>
                                <FloatSection $w={97}>
                                    <FloatItem>
                                        <FloatIcon><SerifT s={38} /></FloatIcon>
                                        <FloatLabel>텍스트</FloatLabel>
                                    </FloatItem>
                                </FloatSection>
                                <FloatSection $w={129} $pl={2}>
                                    <FloatItem>
                                        <FloatIcon><Painter s={42} /></FloatIcon>
                                        <FloatLabel>서식 복사</FloatLabel>
                                    </FloatItem>
                                </FloatSection>
                                <FloatSection $w={265} $pl={15} $pr={7}>
                                    <FloatItem>
                                        <FloatIcon>
                                            <Ico $s={44} $sw={1.900}>
                                                <path d="M4 14V4a1 1 0 0 1 1-1h9M20 10v10a1 1 0 0 1-1 1h-7" />
                                                <path d="M18 5c-2 3-5 7-7 11" strokeWidth="2.800" />
                                                <path d="M5 20c0-3 2-4 4-3l-1 4z" fill="#808080" stroke="#808080" />
                                            </Ico>
                                        </FloatIcon>
                                        <FloatLabel>스타일</FloatLabel>
                                    </FloatItem>
                                    <FloatItem>
                                        <FloatIcon><FillBucket s={34} /></FloatIcon>
                                        <FloatLabel>채우기</FloatLabel>
                                    </FloatItem>
                                    <FloatItem>
                                        <FloatIcon><Pen s={34} /></FloatIcon>
                                        <FloatLabel>선</FloatLabel>
                                    </FloatItem>
                                </FloatSection>
                                <FloatSection $w={101} $pl={6}>
                                    <FloatItem>
                                        <FloatIcon>
                                            <Ico $s={42} $sw={2.100}>
                                                <path d="M11 21H4a1 1 0 0 1-1-1V4a1 1 0 0 1 1-1h16a1 1 0 0 1 1 1v3M3 9h6v12M3 15h6M14 3v4" />
                                                <path d="M16 8l5 3v6l-5 3-5-3v-6z" />
                                                <circle cx="16" cy="14" r="1.300" fill="currentColor" />
                                            </Ico>
                                        </FloatIcon>
                                        <FloatLabel>설정</FloatLabel>
                                    </FloatItem>
                                </FloatSection>
                                <FloatSection $w={98} $last $pl={2}>
                                    <FloatItem>
                                        <FloatIcon>
                                            <Ico $s={44} $sw={2.200}>
                                                <rect x="3" y="3" width="18" height="18" rx="2" />
                                                <path d="M3 9H21M3 15H21M8 3V9M16 9V15M8 15V21" />
                                            </Ico>
                                        </FloatIcon>
                                        <FloatLabel>벽</FloatLabel>
                                    </FloatItem>
                                </FloatSection>
                                <FloatSection $w={20} $last>
                                    <FloatSide>
                                        <Ico $s={26} $sw={1.600}>
                                            <path d="M14 2l8 8-4 1-4 6-8-8 6-4zM9 15l-7 7" fill="currentColor" />
                                        </Ico>
                                        <Dot $mt={29} />
                                        <Dot />
                                        <Dot />
                                        <ResizeMark $s={22} $sw={2} $c="#aaa">
                                            <path d="M10 2v8H3M14 22v-8h7" />
                                        </ResizeMark>
                                    </FloatSide>
                                </FloatSection>
                            </FloatBar>
                            <AiFloat>
                                <Ico $s={54} $sw={1.500}>
                                    <Spark id="aiWand" from="#7a3dff" to="#2f7dff" />
                                    <rect x="8.500" y="6" width="5" height="16" rx="2.500" transform="rotate(-22 11 14)" stroke="url(#aiWand)" />
                                    <path d="M10 10.500 14 9" stroke="url(#aiWand)" />
                                    <path d={sparkle(17, 9, 2.500)} fill="#2f7dff" stroke="none" />
                                    <path d={sparkle(11, 3, 1.800)} fill="#6d5bff" stroke="none" />
                                    <path d={sparkle(5, 15, 1.800)} fill="#7a3dff" stroke="none" />
                                </Ico>
                                <VRule $h={49} />
                                <Ico $s={50} $box="2 1 24 24">
                                    <Spark id="aiStar" from="#7a3dff" to="#2f7dff" />
                                    <path d={STAR} fill="url(#aiStar)" stroke="none" />
                                    <path d={sparkle(19, 5, 3.500)} fill="#2f7dff" stroke="none" />
                                </Ico>
                            </AiFloat>
                        </Canvas>
                        <VScroll>
                            <Thumb $h={709} />
                        </VScroll>
                    </MidRow>
                    <HScroll>
                        <Thumb $ml={62} $w={924} $h={20} />
                    </HScroll>
                    <Palette>
                        <FillBucket s={26} bar="#fff" />
                        <Caret $ml={2} $s={4} />
                        <Swatches $ml={10}>
                            {COLORS.map((c, i) => (
                                <Swatch key={i} $c={c} />
                            ))}
                        </Swatches>
                    </Palette>
                </Workspace>
            </Main>

            <StatusBar>
                <Ico $ml={32} $s={34} $sw={1.600} $c="#333">
                    <path d="M1 5V19M23 5V19" />
                    <rect x="5" y="6" width="14" height="12" />
                </Ico>
                <VRule $ml={24} $h={43} />
                <PageName $ml={33} $w={195}>Page-1</PageName>
                <Caret />
                <VRule $ml={19} $h={43} />
                <Plus style={{ marginLeft: 24, flex: "none" }} size={32} color="#333" strokeWidth={1.800} />
                <VRule $ml={24} $h={43} />
                <PageName $ml={30} $active>Page-1</PageName>
                <VRule $ml={1116} $h={43} />
                <StatusText $ml={17} $w={135}>형태 수: 15.5</StatusText>
                <VRule $ml={17} $h={43} />
                <StatusText $ml={17} $w={129}>모양 ID: 114</StatusText>
                <VRule $ml={27} $h={43} />
                <Ico $ml={9} $s={44} $sw={1.300} $c="#333">
                    <path d="M12 2 21 11 12 18 3 11z" />
                    <path d="M3 15l9 7 9-7" />
                </Ico>
                <Caret $ml={7} $s={4} />
                <Ico $ml={30} $s={32} $sw={1.800} $c="#333">
                    <path d="M7 3H2V21H7M17 3H22V21H17" />
                    <rect x="9" y="7" width="6" height="10" />
                </Ico>
                <StatusText $ml={18} $w={49}>집중</StatusText>
                <CirclePlay style={{ marginLeft: 22, flex: "none" }} size={38} color="#333" strokeWidth={1.500} />
                <VRule $ml={21} $h={43} />
                <Minus style={{ marginLeft: 12, flex: "none" }} size={38} color="#333" strokeWidth={1.800} />
            </StatusBar>
        </Page>
    );
}
